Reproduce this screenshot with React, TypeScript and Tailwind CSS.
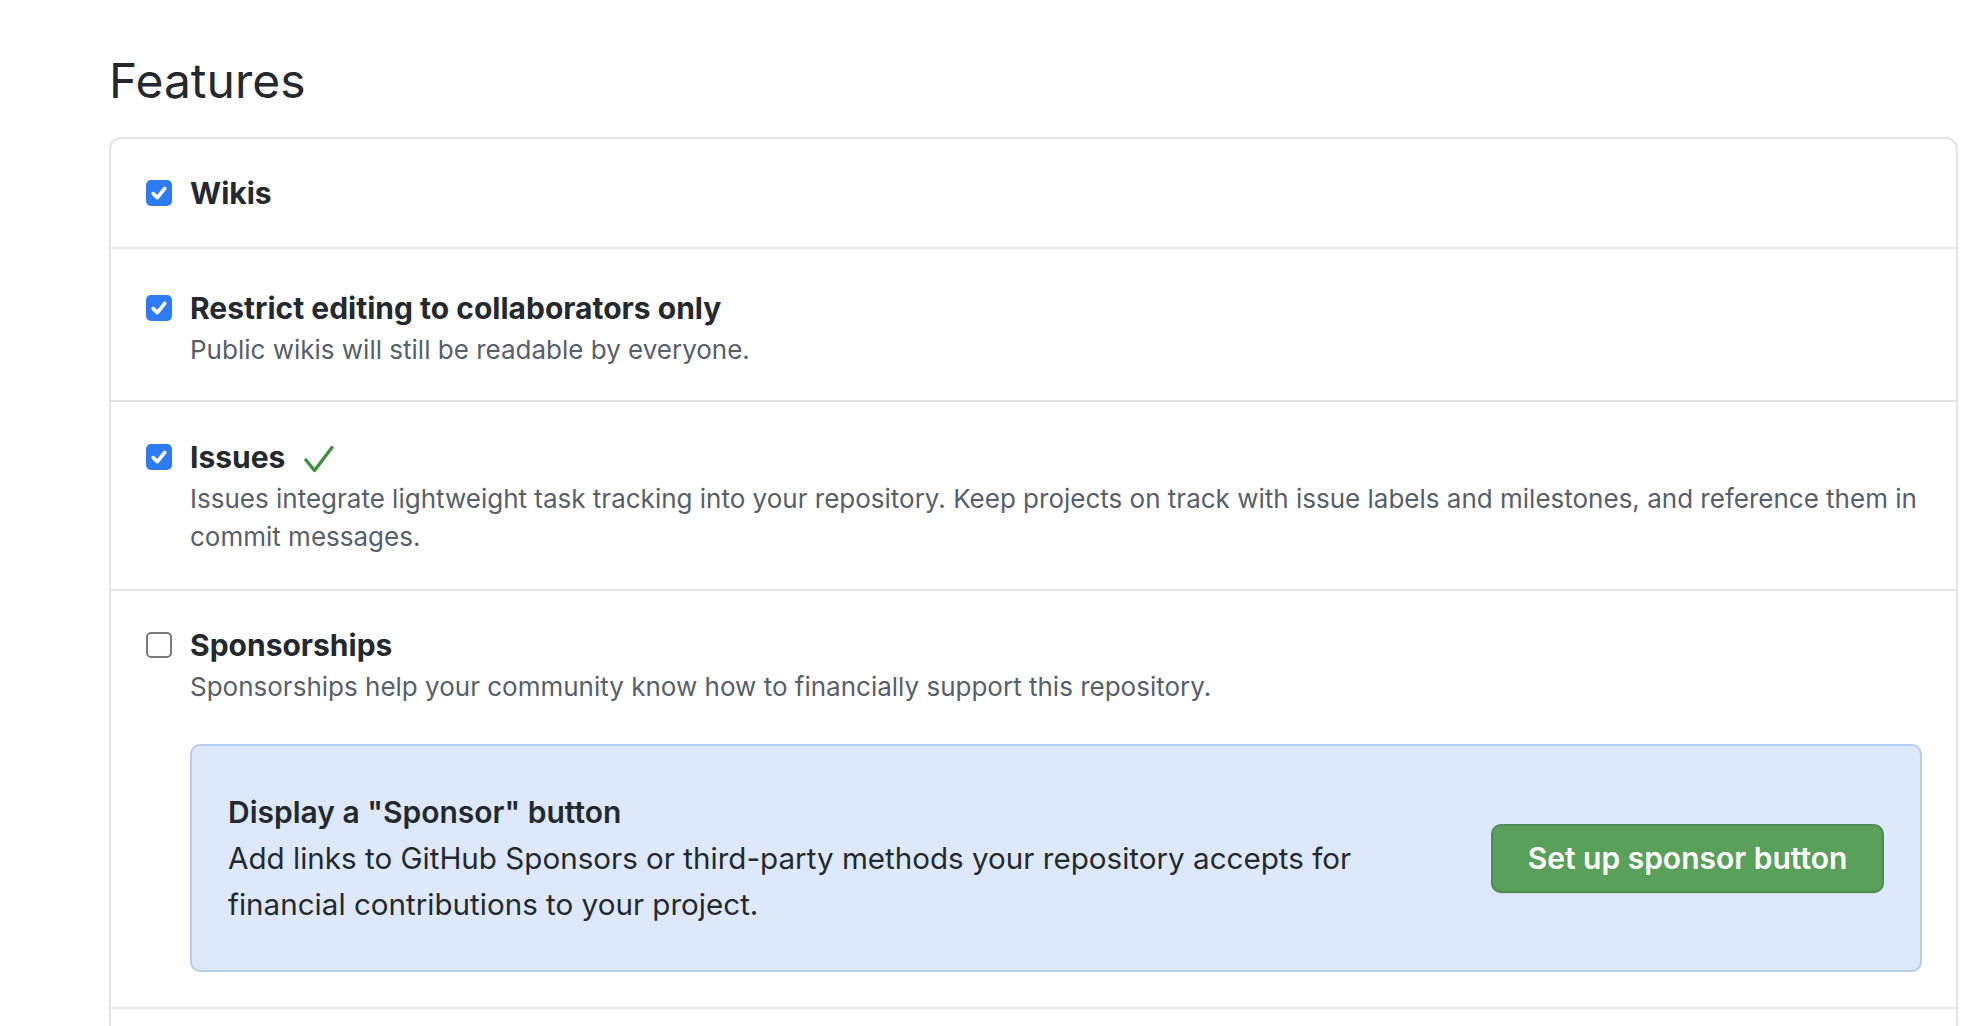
import type { ReactNode } from 'react';

function Checkbox({ checked }: { checked: boolean }) {
  if (!checked) {
    return (
      <div className="mt-[7px] h-[26px] w-[26px] shrink-0 rounded-[5px] border-2 border-[#7a7a7a] bg-white"></div>
    );
  }
  return (
    <div className="mt-[7px] flex h-[26px] w-[26px] shrink-0 items-center justify-center rounded-[5px] bg-[#2f7bf5]">
      <svg width="18" height="18" viewBox="0 0 18 18" fill="none">
        <polyline points="3.2,9.6 7.4,13.6 14.8,4.4" stroke="white" strokeWidth="3.6" strokeLinecap="round" strokeLinejoin="round" />
      </svg>
    </div>
  );
}

interface FeatureRowProps {
  title: string;
  checked: boolean;
  description?: string;
  badge?: boolean;
  className: string;
  children?: ReactNode;
}

function FeatureRow({ title, checked, description, badge, className, children }: FeatureRowProps) {
  return (
    <div className={`flex items-start gap-[18px] pl-[35px] pr-[34px] ${className}`}>
      <Checkbox checked={checked} />
      <div className="min-w-0 flex-1">
        <div className="flex items-center gap-[19px]">
          <span className="text-[30px] font-bold leading-[40px]">{title}</span>
          {badge && (
            <svg width="31" height="30" viewBox="0 0 31 30" fill="none" className="mt-[4px]">
              <polyline points="2,16 10.5,26.5 28,3.5" stroke="#3f8f41" strokeWidth="3.4" strokeLinecap="round" strokeLinejoin="round" />
            </svg>
          )}
        </div>
        {description && (
          <p className="mt-[3px] text-[26px] leading-[38px] text-[#57606a]">{description}</p>
        )}
        {children}
      </div>
    </div>
  );
}

export default function App() {
  return (
    <div className="min-h-screen bg-white font-['Inter',sans-serif] text-[#24292f]">
      <div className="pl-[109px] pr-[16px] pt-[49px]">
        <h2 className="text-[48px] font-normal leading-[64px]">Features</h2>

        <div className="mt-[24px] rounded-[12px] border-2 border-[#e4e5e9]">
          <FeatureRow title="Wikis" checked className="pt-[34px] pb-[34px]" />

          <FeatureRow
            title="Restrict editing to collaborators only"
            checked
            description="Public wikis will still be readable by everyone."
            className="border-t-2 border-[#e4e5e9] pt-[39px] pb-[31px]"
          />

          <FeatureRow
            title="Issues"
            checked
            badge
            description="Issues integrate lightweight task tracking into your repository. Keep projects on track with issue labels and milestones, and reference them in commit messages."
            className="border-t-2 border-[#e4e5e9] pt-[35px] pb-[33px]"
          />

          <FeatureRow
            title="Sponsorships"
            checked={false}
            description="Sponsorships help your community know how to financially support this repository."
            className="border-t-2 border-[#e4e5e9] pt-[34px] pb-[35px]"
          >
            <div className="mt-[38px] flex items-center justify-between rounded-[10px] border-2 border-[#b6cdee] bg-[#dde9fb] pb-[43px] pl-[36px] pr-[36px] pt-[43px]">
              <div className="max-w-[1180px] leading-[46px]">
                <h3 className="text-[30px] font-semibold">Display a "Sponsor" button</h3>
                <p className="text-[29.6px]">
                  Add links to GitHub Sponsors or third-party methods your repository accepts for financial
                  contributions to your project.
                </p>
              </div>
              <button className="h-[69px] w-[393px] shrink-0 rounded-[10px] border-2 border-[#4d8c4f] bg-[#59a15b] text-[30px] font-semibold text-white shadow-[0_1px_0_rgba(27,31,35,0.1)]">
                Set up sponsor button
              </button>
            </div>
          </FeatureRow>

          <div className="h-[60px] border-t-2 border-[#e4e5e9]"></div>
        </div>
      </div>
    </div>
  );
}
